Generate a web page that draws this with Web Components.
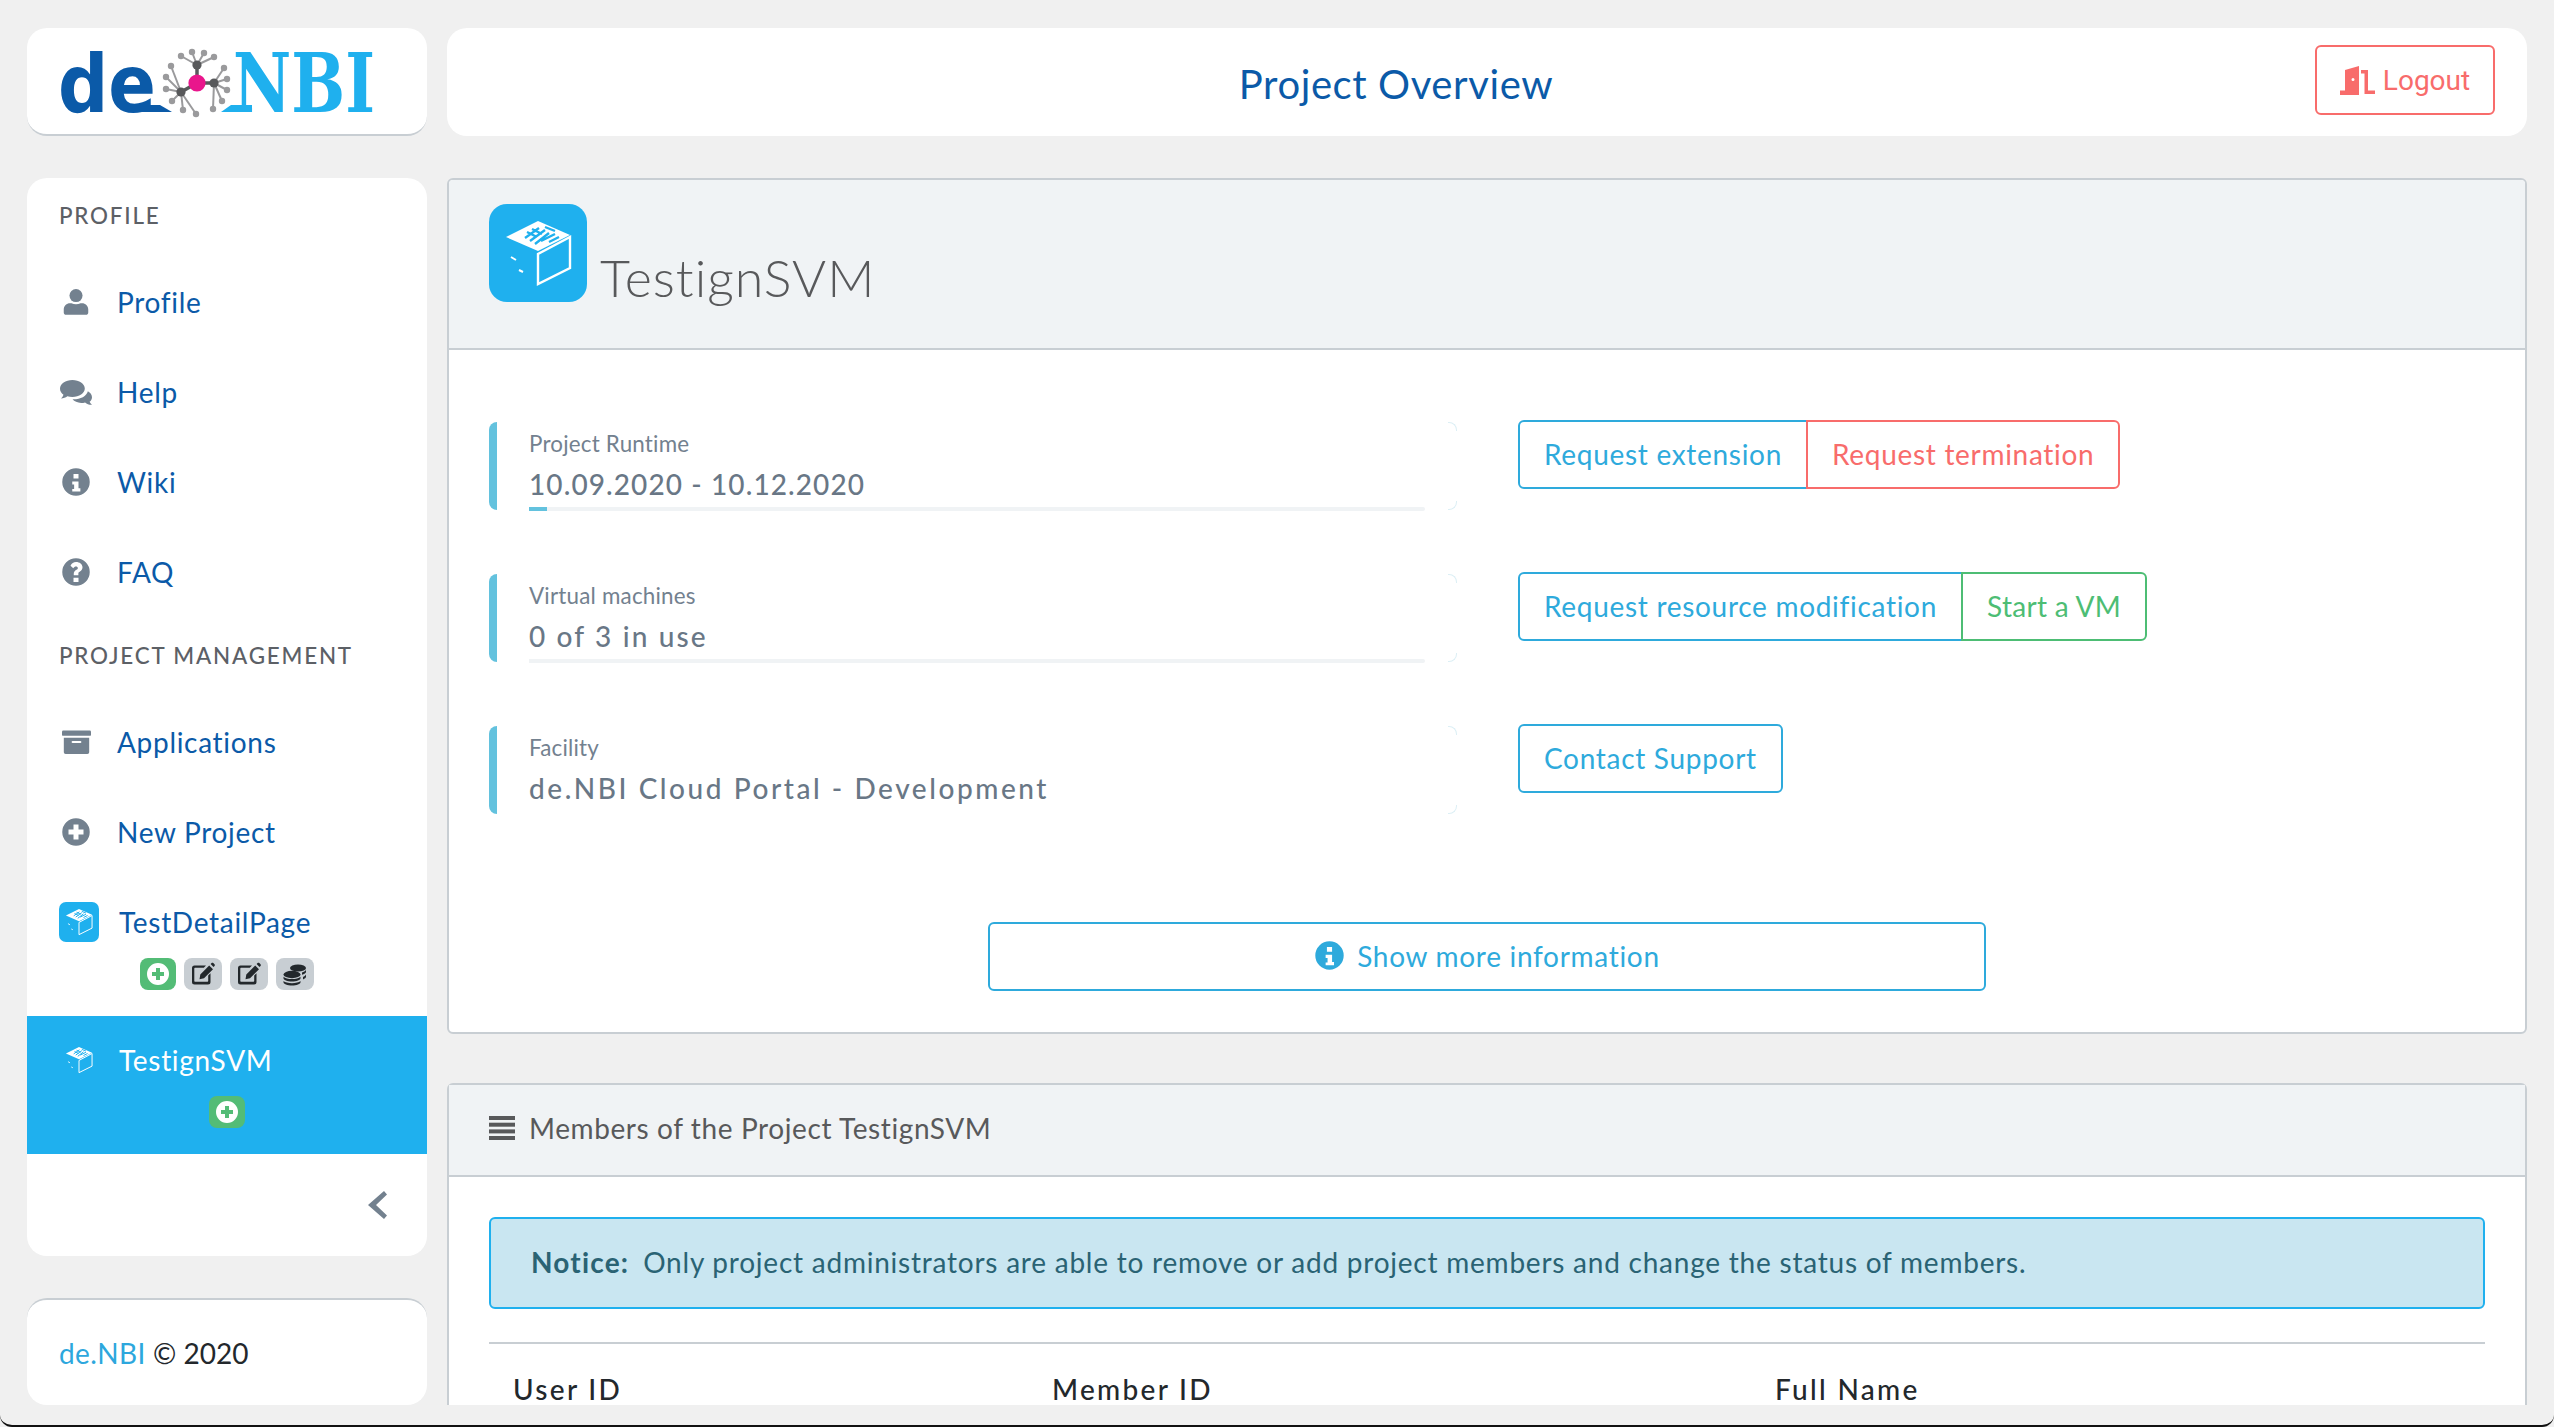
<!DOCTYPE html>
<html lang="en">
<head>
<meta charset="utf-8">
<title>Project Overview</title>
<style>
  html, body { margin: 0; padding: 0; height: 100%; background: #f0f0f0; }
  body { font-family: Lato, "Open Sans", sans-serif; letter-spacing: .7px; overflow: hidden; }
</style>
</head>
<body>

<template id="cube-art">
  <svg viewBox="0 0 98 98" width="100%" height="100%" aria-hidden="true">
    <path d="M17 33 49 17 81 31 49 47Z" fill="#fff"/>
    <path d="M38 28 48 33M43 25 53 30M36 34 50 24M41 37 56 26M46 40 60 29M56 23 66 27M52 37 66 30M60 38 70 33" stroke="#1fb0ee" stroke-width="2.4" fill="none"/>
    <path d="M49 50V80L81 64V33L49 50Z" fill="none" stroke="#fff" stroke-width="2.4"/>
    <path d="M22 53 27 56M30 66 34 68" stroke="#fff" stroke-width="2" fill="none"/>
  </svg>
</template>

<app-shell>
  <app-card slot="logo" logo><de-logo></de-logo></app-card>
  <app-topbar slot="topbar">Project Overview</app-topbar>

  <side-nav slot="nav">
    <nav-title>Profile</nav-title>
    <nav-item icon="user" size="28">Profile</nav-item>
    <nav-item icon="comments" size="32">Help</nav-item>
    <nav-item icon="info" size="30">Wiki</nav-item>
    <nav-item icon="question" size="30">FAQ</nav-item>
    <nav-title second>Project Management</nav-title>
    <nav-item icon="archive" size="29">Applications</nav-item>
    <nav-item icon="plus" size="30">New Project</nav-item>
    <project-item badges="plus edit edit coins">TestDetailPage</project-item>
    <project-item active badges="plus">TestignSVM</project-item>
  </side-nav>

  <app-card slot="footer" foot><span style="color:#2da7dd;letter-spacing:.4px">de.NBI</span> © 2020</app-card>

  <project-card title-text="TestignSVM">
    <info-row label="Project Runtime" value="10.09.2020 - 10.12.2020" spacing="1.1" progress="2">
      <btn-group>
        <ui-btn color="#2eaadc" first>Request extension</ui-btn>
        <ui-btn color="#f86c6b" last>Request termination</ui-btn>
      </btn-group>
    </info-row>
    <info-row label="Virtual machines" value="0 of 3 in use" spacing="2.15" progress="0">
      <btn-group>
        <ui-btn color="#2eaadc" first>Request resource modification</ui-btn>
        <ui-btn color="#4dbd74" last style="letter-spacing:.3px">Start a VM</ui-btn>
      </btn-group>
    </info-row>
    <info-row label="Facility" value="de.NBI Cloud Portal - Development" spacing="2.55">
      <btn-group><ui-btn color="#2eaadc" first last>Contact Support</ui-btn></btn-group>
    </info-row>
  </project-card>

  <members-card></members-card>
</app-shell>

<script>
const ICONS = {
  user: '<circle cx="12" cy="6.500" r="5.600"/><path d="M1.500 21v-2.500c0-3.400 2.500-5.500 5.300-5.500h1.300c1.200.6 2.500.9 3.900.9s2.700-.3 3.900-.9h1.300c2.800 0 5.300 2.100 5.300 5.500V21c0 1.100-.9 2-2 2h-17c-1.100 0-2-.9-2-2Z"/>',
  comments: '<path d="M9.300 3C4.200 3 0 5.900 0 9.500c0 1.800 1 3.400 2.600 4.600-.3 1.100-.9 2-1.800 2.800 1.800-.1 3.400-.7 4.700-1.700 1.200.4 2.500.5 3.800.5 5.100 0 9.300-2.800 9.300-6.300S14.400 3 9.300 3Z"/><path d="M24 21.500c-.9-.5-1.500-1.200-1.800-2.100 1.100-.9 1.800-2.100 1.800-3.500 0-1.900-1.200-3.500-3.100-4.500-1 3.800-5.700 6.300-11.500 6.100 1.300 1.600 3.700 2.700 6.500 2.700 1 0 2-.1 2.900-.4 1.500 1.300 3.400 1.900 5.200 1.700Z"/>',
  info: '<path fill-rule="evenodd" d="M12 1a11 11 0 1 0 0 22 11 11 0 0 0 0-22Zm-2 4.500h4v3.600h-4Zm-1 6h5v5.500h1.500v2.500h-6.500V17.500H10.500v-3.500H9Z"/>',
  question: '<path fill-rule="evenodd" d="M12 1a11 11 0 1 0 0 22 11 11 0 0 0 0-22Zm-2 15.500h4V20h-4Zm2-12.500c3 0 5.200 1.800 5.200 4.200 0 1.900-1.100 2.800-2.300 3.500-.9.500-1 .8-1 1.300V14.500h-3.700v-.9c0-1.700.8-2.700 2.100-3.400.8-.5 1.200-.8 1.200-1.500 0-.7-.7-1.200-1.500-1.200-1 0-1.500.5-2.200 1.400L7.600 6.900C8.600 5.100 10 4 12 4Z"/>',
  archive: '<rect x="0" y="2" width="24" height="4.500" rx="1"/><path fill-rule="evenodd" d="M1.500 8h21v12a1.500 1.500 0 0 1-1.500 1.500H3A1.500 1.500 0 0 1 1.500 20Zm7.300 2.800a.8.8 0 0 0 0 1.700h6.400a.8.8 0 0 0 0-1.700Z"/>',
  plus: '<path fill-rule="evenodd" d="M12 1a11 11 0 1 0 0 22 11 11 0 0 0 0-22Zm-2 5h4v4h4v4h-4v4h-4v-4H6v-4h4Z"/>',
  edit: '<path d="M3.500 3.500H15L12.800 5.800H4a.7.7 0 0 0-.7.7V19c0 .4.300.7.700.7h12.500c.4 0 .7-.300.7-.7v-5.500l2.300-2.300V20a2.500 2.500 0 0 1-2.500 2.500H3.500A2.500 2.500 0 0 1 1 20V6a2.500 2.500 0 0 1 2.500-2.500Z"/><path d="M18.200 3.500 22 7.300 13 16.300 8.500 17.300 9.300 12.500ZM19.600 2l1-1c.5-.5 1.200-.5 1.700 0l1.200 1.200c.5.500.5 1.200 0 1.700l-1 1Z"/>',
  coins: '<ellipse cx="15" cy="6" rx="8" ry="3.600"/><path d="M23 8v2c0 1.200-1.600 2.200-4 2.800v-2.400c1.700-.4 3.200-1.200 4-2.400ZM23 12.500v2.300c0 1.100-1.300 2-3 2.600v-2.400c1.300-.4 2.400-1.300 3-2.500Z"/><ellipse cx="9" cy="12.500" rx="8.500" ry="3.700"/><path d="M.5 14.800c1.500 1.500 4.800 2.300 8.500 2.300s7-.8 8.500-2.300v1.500c0 1.800-3.800 3.200-8.500 3.200S.5 18.100.5 16.300ZM.5 19c1.500 1.400 4.800 2.200 8.500 2.200s7-.8 8.500-2.200v1.200c0 1.800-3.800 3.300-8.500 3.300S.5 22 .5 20.200Z"/>',
};

function icon(name, size) {
  return `<svg viewBox="0 0 24 24" width="${size}" height="${size}" fill="currentColor" aria-hidden="true">${ICONS[name]}</svg>`;
}

// small helper so every element does its own shadow setup the same way
function shadow(el, html) {
  el.attachShadow({ mode: 'open' }).innerHTML = html;
}

class AppShell extends HTMLElement {
  constructor() {
    super();
    shadow(this, `
      <style>
        :host {
          display: block; box-sizing: border-box; height: 1427px; overflow: hidden;
          border-bottom: 2px solid #111; border-radius: 0 0 12px 12px;
        }
        .grid {
          display: grid; box-sizing: border-box; height: 1405px; overflow: hidden;
          padding: 28px 27px 0 27px;
          grid-template-columns: 400px 2080px; column-gap: 20px;
          grid-template-rows: 108px 1fr; row-gap: 42px;
        }
        .left { display: flex; flex-direction: column; gap: 42px; min-height: 0; }
        .main { display: flex; flex-direction: column; gap: 49px; min-height: 0; overflow: hidden; }
      </style>
      <div class="grid">
        <slot name="logo"></slot>
        <slot name="topbar"></slot>
        <div class="left"><slot name="nav"></slot><slot name="footer"></slot></div>
        <div class="main"><slot></slot></div>
      </div>`);
  }
}

class AppCard extends HTMLElement {
  constructor() {
    super();
    shadow(this, `
      <style>
        :host {
          display: flex; align-items: center; box-sizing: border-box; background: #fff;
          border-radius: 20px; color: #23282c; font-size: 28px; letter-spacing: 0;
        }
        :host([logo]) { height: 108px; border-bottom: 2px solid #c8ced3; }
        :host([foot]) { height: 107px; border-top: 2px solid #c8ced3; padding-left: 32px; white-space: pre; }
      </style><slot></slot>`);
  }
}

class DeLogo extends HTMLElement {
  constructor() {
    super();
    const hubs = [
      { at: [197, 65], tips: [[181, 56], [192, 52], [204, 53], [214, 57]] },
      { at: [214, 83], tips: [[224, 68], [227, 79], [227, 90], [222, 101], [213, 109]] },
      { at: [181, 92], tips: [[171, 66], [166, 77], [166, 89], [172, 101], [183, 110], [196, 114]] },
    ];
    let arms = '';
    hubs.forEach(h => {
      h.tips.forEach(t => {
        arms += `<line x1="${h.at[0]}" y1="${h.at[1]}" x2="${t[0]}" y2="${t[1]}" stroke="#9a9a9c" stroke-width="2"/>`;
        arms += `<circle cx="${t[0]}" cy="${t[1]}" r="3.200" fill="#9a9a9c"/>`;
      });
      arms += `<line x1="197" y1="83" x2="${h.at[0]}" y2="${h.at[1]}" stroke="#58595b" stroke-width="3.500"/>`;
      arms += `<circle cx="${h.at[0]}" cy="${h.at[1]}" r="4.600" fill="#58595b"/>`;
    });
    shadow(this, `
      <style>:host { display: block; width: 400px; height: 106px; letter-spacing: 0; } svg { display: block; }</style>
      <svg viewBox="27 28 400 106" width="400" height="106">
        <text x="58" y="112" font-family="'DejaVu Sans'" font-weight="700" font-size="80" fill="#0b5aa8" textLength="98" lengthAdjust="spacingAndGlyphs">de</text>
        <path d="M135 105H160L172 112H135Z" fill="#0b5aa8"/>
        <text x="233" y="112" font-family="'DejaVu Serif'" font-weight="700" font-size="82" fill="#1fb0ee" textLength="142" lengthAdjust="spacingAndGlyphs">NBI</text>
        <path d="M221 112 231 105H252V112Z" fill="#1fb0ee"/>
        ${arms}
        <circle cx="197" cy="83" r="8.600" fill="#e9168c"/>
      </svg>`);
  }
}

class AppTopbar extends HTMLElement {
  constructor() {
    super();
    shadow(this, `
      <style>
        :host {
          display: flex; align-items: center; box-sizing: border-box; height: 108px;
          background: #fff; border-radius: 20px; padding-right: 32px;
        }
        h1 { flex: 1; margin: 3px 0 0 30px; text-align: center; font-weight: 400; font-size: 40px; letter-spacing: .6px; color: #0b5aa8; }
        a {
          display: flex; align-items: center; justify-content: center; gap: 8px; box-sizing: border-box;
          width: 180px; height: 70px; margin-top: -4px; border: 2px solid #f86c6b; border-radius: 6px;
          color: #f86c6b; font-size: 28px; font-family: Roboto, sans-serif; letter-spacing: 0;
        }
      </style>
      <h1><slot></slot></h1>
      <a>
        <svg viewBox="0 0 35 29" width="35" height="29" fill="#f86c6b" aria-hidden="true">
          <path fill-rule="evenodd" d="M0 24.500H5V4L19 0V29H0ZM13 12a1.300 1.300 0 1 0 0 3 1.300 1.300 0 0 0 0-3Z"/>
          <path d="M21 4h7v20.500h7V28H24.500V7.500H21Z"/>
        </svg>
        Logout
      </a>`);
  }
}

class SideNav extends HTMLElement {
  constructor() {
    super();
    shadow(this, `
      <style>
        :host {
          display: flex; flex-direction: column; flex: 1; min-height: 0; box-sizing: border-box;
          background: #fff; border-radius: 20px; padding-top: 16px;
        }
        .toggle { margin-top: auto; height: 102px; display: flex; align-items: center; justify-content: flex-end; padding-right: 40px; color: #73818f; box-sizing: border-box; }
      </style>
      <slot></slot>
      <div class="toggle">
        <svg viewBox="0 0 20 28" width="20" height="28" fill="currentColor" aria-hidden="true">
          <path d="M17 0 20 3.500 9 14 20 24.500 17 28 1 14Z"/>
        </svg>
      </div>`);
  }
}

class NavTitle extends HTMLElement {
  constructor() {
    super();
    shadow(this, `
      <style>
        :host {
          display: block; box-sizing: border-box; height: 44px; padding: 0 32px; line-height: 44px; margin-bottom: 19px;
          font-size: 22.400px; font-weight: 500; letter-spacing: 1.800px; text-transform: uppercase; color: #5c6066;
        }
        :host([second]) { margin-top: 17px; }
      </style><slot></slot>`);
  }
}

class NavItem extends HTMLElement {
  constructor() {
    super();
    const name = this.getAttribute('icon');
    const size = this.getAttribute('size') || 28;
    shadow(this, `
      <style>
        :host { display: flex; align-items: center; height: 90px; padding-left: 32px; color: #0b5aa8; font-size: 28px; }
        .ic { width: 34px; margin-right: 24px; display: flex; justify-content: center; color: #73818f; }
      </style>
      <span class="ic">${icon(name, size)}</span><slot></slot>`);
  }
}

class ProjectItem extends HTMLElement {
  constructor() {
    super();
    const names = (this.getAttribute('badges') || '').split(' ');
    const badges = names.map(n =>
      `<span class="badge ${n === 'plus' ? 'ok' : ''}">${icon(n, 24)}</span>`).join('');
    shadow(this, `
      <style>
        :host { display: block; flex: none; box-sizing: border-box; height: 139px; padding-top: 25px; color: #0b5aa8; font-size: 28px; }
        :host([active]) { height: 138px; padding-top: 24px; background: #1fb0ee; color: #fff; }
        .row { display: flex; align-items: center; height: 40px; padding-left: 32px; }
        .cube { width: 40px; height: 40px; border-radius: 7px; background: #1fb0ee; margin-right: 20px; }
        :host([active]) .cube { background: transparent; }
        .badges { display: flex; justify-content: center; gap: 8px; margin-top: 16px; }
        .badge {
          display: flex; align-items: center; justify-content: center; width: 38px; height: 32px;
          border-radius: 8px; background: #c8ced3; color: #23282c;
        }
        .badge.ok { width: 36px; background: #53bc76; color: #fff; }
      </style>
      <div class="row"><span class="cube"></span><slot></slot></div>
      <div class="badges">${badges}</div>`);
    this.shadowRoot.querySelector('.cube').append(document.getElementById('cube-art').content.cloneNode(true));
  }
}

class ProjectCard extends HTMLElement {
  constructor() {
    super();
    shadow(this, `
      <style>
        :host {
          display: block; flex: none; box-sizing: border-box; height: 856px;
          background: #fff; border: 2px solid #c8ced3; border-radius: 6px; overflow: hidden;
        }
        header {
          display: flex; align-items: flex-end; box-sizing: border-box; height: 170px;
          padding: 24px 40px 0; background: #f0f3f5; border-bottom: 2px solid #c8ced3;
        }
        .cube { width: 98px; height: 98px; border-radius: 18px; background: #1fb0ee; margin: 0 13px 46px 0; flex: none; }
        h2 { margin: 0 0 41px; font-weight: 300; font-size: 52px; line-height: 60px; letter-spacing: 1px; color: #58595b; }
        .body { display: flex; flex-direction: column; gap: 62px; padding: 70px 40px 0; }
        .more {
          display: flex; align-items: center; justify-content: center; gap: 12px; box-sizing: border-box;
          width: 998px; height: 69px; margin: 46px 0 0 499px; padding-bottom: 2px;
          border: 2px solid #2eaadc; border-radius: 6px; color: #2eaadc; font-size: 28px;
        }
      </style>
      <header><span class="cube"></span><h2>${this.getAttribute('title-text')}</h2></header>
      <div class="body"><slot></slot>
        <div class="more">${icon('info', 31)}Show more information</div>
      </div>`);
    this.shadowRoot.querySelector('.cube').append(document.getElementById('cube-art').content.cloneNode(true));
  }
}

class InfoRow extends HTMLElement {
  constructor() {
    super();
    const p = this.getAttribute('progress');
    const bar = p === null ? '' :
      `<div class="track"><div class="fill" style="width:${p}%"></div></div>`;
    shadow(this, `
      <style>
        :host { display: grid; grid-template-columns: 1029px auto; align-items: start; }
        .box {
          position: relative; box-sizing: border-box; width: 968px; height: 88px; margin-top: 2px; padding: 8px 20px 0 32px;
          border-left: 8px solid #63c2de; border-radius: 8px 0 0 8px;
        }
        /* barely visible right corners of the callout */
        .box::before, .box::after {
          content: ""; position: absolute; right: 0; width: 8px; height: 8px; border-right: 1px solid #dceff5;
        }
        .box::before { top: 0; border-top: 1px solid #dceff5; border-top-right-radius: 8px; }
        .box::after { bottom: 0; border-bottom: 1px solid #dceff5; border-bottom-right-radius: 8px; }
        .label { font-size: 22.400px; line-height: 28px; letter-spacing: .2px; color: #73818f; }
        .value { font-size: 28px; line-height: 34px; margin-top: 9px; letter-spacing: ${this.getAttribute('spacing')}px; color: #697786; font-weight: 500; }
        .track { height: 4px; width: 896px; background: #f0f3f5; margin-top: 6px; border-radius: 0 2px 2px 0; }
        .fill { height: 100%; background: #63c2de; }
      </style>
      <div class="box">
        <div class="label">${this.getAttribute('label')}</div>
        <div class="value">${this.getAttribute('value')}</div>
        ${bar}
      </div>
      <div><slot></slot></div>`);
  }
}

class BtnGroup extends HTMLElement {
  constructor() {
    super();
    shadow(this, `<style>:host { display: inline-flex; }</style><slot></slot>`);
  }
}

class UiBtn extends HTMLElement {
  constructor() {
    super();
    const c = this.getAttribute('color');
    shadow(this, `
      <style>
        :host {
          display: flex; align-items: center; box-sizing: border-box; height: 69px; padding: 0 24px 2px;
          border: 2px solid ${c}; color: ${c}; font-size: 28px; white-space: nowrap;
        }
        :host([first]) { border-top-left-radius: 6px; border-bottom-left-radius: 6px; }
        :host([last]) { border-top-right-radius: 6px; border-bottom-right-radius: 6px; }
        :host([last]:not([first])) { margin-left: -2px; }
      </style><slot></slot>`);
  }
}

class MembersCard extends HTMLElement {
  constructor() {
    super();
    shadow(this, `
      <style>
        :host {
          display: block; flex: none; box-sizing: border-box; height: 400px;
          background: #fff; border: 2px solid #c8ced3; border-radius: 6px 6px 0 0;
        }
        header {
          display: flex; align-items: center; gap: 14px; box-sizing: border-box; height: 92px; padding: 0 40px 4px;
          background: #f0f3f5; border-bottom: 2px solid #c8ced3; color: #58595b; font-size: 28px; letter-spacing: .6px;
        }
        .notice {
          margin: 40px 40px 0; box-sizing: border-box; height: 92px; padding: 0 0 2px 40px;
          display: flex; align-items: center; white-space: pre; letter-spacing: .77px;
          background: #c9e6f1; border: 2px solid #1fb0ee; border-radius: 6px; color: #2a6374; font-size: 28px;
        }
        .notice b { font-weight: 700; letter-spacing: 1.2px; padding-right: 6px; }
        hr { border: 0; border-top: 2px solid #c8ced3; margin: 33px 40px 0; }
        .cols { display: grid; grid-template-columns: 539px 723px auto; padding: 28px 64px 0; color: #23282c; font-size: 28px; font-weight: 500; line-height: 34px; letter-spacing: 2.300px; }
      </style>
      <header>
        <svg viewBox="0 0 26 24" width="26" height="24" fill="#58595b" aria-hidden="true">
          <rect y="0" width="26" height="4"/><rect y="6.700" width="26" height="4"/>
          <rect y="13.400" width="26" height="4"/><rect y="20" width="26" height="4"/>
        </svg>
        Members of the Project TestignSVM
      </header>
      <div class="notice"><b>Notice:</b> Only project administrators are able to remove or add project members and change the status of members.</div>
      <hr>
      <div class="cols"><span>User ID</span><span>Member ID</span><span>Full Name</span></div>`);
  }
}

customElements.define('app-shell', AppShell);
customElements.define('app-card', AppCard);
customElements.define('de-logo', DeLogo);
customElements.define('app-topbar', AppTopbar);
customElements.define('side-nav', SideNav);
customElements.define('nav-title', NavTitle);
customElements.define('nav-item', NavItem);
customElements.define('project-item', ProjectItem);
customElements.define('project-card', ProjectCard);
customElements.define('info-row', InfoRow);
customElements.define('btn-group', BtnGroup);
customElements.define('ui-btn', UiBtn);
customElements.define('members-card', MembersCard);
</script>
</body>
</html>
